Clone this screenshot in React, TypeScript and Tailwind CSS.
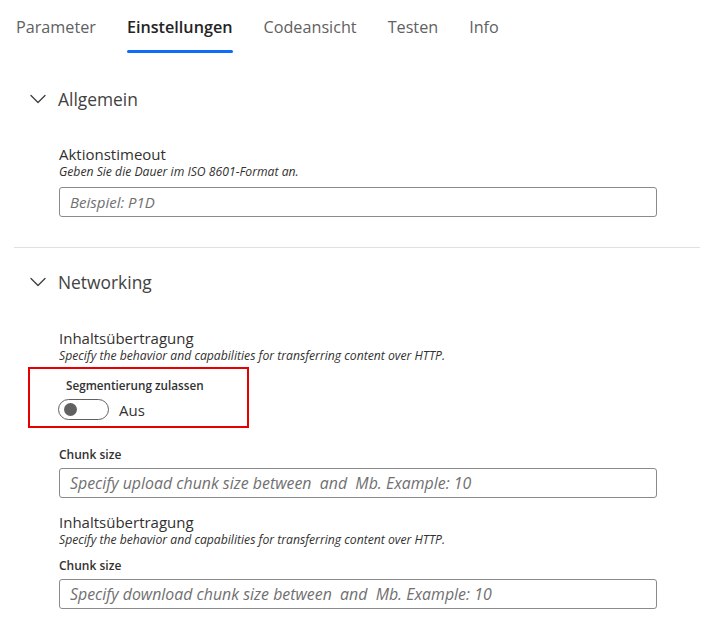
import React from "react";

const Chevron = () => (
  <svg width="16" height="10" viewBox="0 0 16 10" fill="none" className="shrink-0">
    <path d="M1 1.5 L8 8.5 L15 1.5" stroke="#424242" strokeWidth="1.4" strokeLinecap="round" strokeLinejoin="round" />
  </svg>
);

const Input = ({ placeholder, size }: { placeholder: string; size: "sm" | "lg" }) => (
  <div className="w-[598px] h-[30px] border border-[#8a8a8a] rounded-[3px] flex items-center pl-[10px]">
    <span className={"italic text-[#707070] leading-[20px] whitespace-pre " + (size === "lg" ? "text-[15.9px]" : "text-[15px]")}>{placeholder}</span>
  </div>
);

const Label = ({ children }: { children: React.ReactNode }) => (
  <div className="text-[15px] leading-[19px] text-[#323130]">{children}</div>
);

const Sub = ({ children }: { children: React.ReactNode }) => (
  <div className="text-[12.2px] italic leading-[16px] text-[#323130]">{children}</div>
);

export default function App() {
  const tabs = ["Parameter", "Einstellungen", "Codeansicht", "Testen", "Info"];
  return (
    <div className="w-[728px] h-[617px] bg-white overflow-hidden" style={{ fontFamily: '"Open Sans", "Noto Sans", sans-serif' }}>
      <div className="flex pl-[16px] gap-[31px] h-[53px]">
        {tabs.map((t, i) => (
          <div key={t} className="flex flex-col pt-[15px]">
            <span className={"text-[16.2px] leading-[24px] " + (i === 1 ? "font-semibold text-[#242424]" : "text-[#616161]")}>{t}</span>
            <div className={"mt-[11px] h-[3px] rounded-full " + (i === 1 ? "bg-[#0f6cfa]" : "bg-transparent")} />
          </div>
        ))}
      </div>

      <div className="flex items-center gap-[12px] pl-[30px] mt-[32px] h-[28px]">
        <Chevron />
        <span className="text-[17.4px] text-[#424242] leading-[28px]">Allgemein</span>
      </div>

      <div className="pl-[59px] mt-[32px]">
        <Label>Aktionstimeout</Label>
        <Sub>Geben Sie die Dauer im ISO 8601-Format an.</Sub>
        <div className="mt-[7px]">
          <Input size="sm" placeholder="Beispiel: P1D" />
        </div>
      </div>

      <div className="ml-[14px] w-[686px] h-px bg-[#e0e0e0] mt-[30px]" />

      <div className="flex items-center gap-[12px] pl-[30px] mt-[20px] h-[28px]">
        <Chevron />
        <span className="text-[17.4px] text-[#424242] leading-[28px]">Networking</span>
      </div>

      <div className="pl-[59px] mt-[33px]">
        <Label>Inhaltsübertragung</Label>
        <Sub>Specify the behavior and capabilities for transferring content over HTTP.</Sub>
      </div>

      <div className="ml-[28px] mt-[3px] w-[221px] h-[61px] border-2 border-[#e60000] pl-[28px] pt-[8px]">
        <div className="pl-[8px] text-[11.7px] leading-[16px] font-semibold text-[#323130]">Segmentierung zulassen</div>
        <div className="flex items-center mt-[6px] gap-[10px]">
          <div className="w-[51px] h-[21px] rounded-full border border-[#616161] flex items-center pl-[5px]">
            <div className="w-[13px] h-[13px] rounded-full bg-[#616161]" />
          </div>
          <span className="text-[15px] leading-[20px] text-[#323130]">Aus</span>
        </div>
      </div>

      <div className="pl-[59px] mt-[19px]">
        <div className="text-[12px] font-semibold leading-[16px] text-[#323130]">Chunk size</div>
        <div className="mt-[5px]">
          <Input size="lg" placeholder="Specify upload chunk size between  and  Mb. Example: 10" />
        </div>
        <div className="mt-[15px]">
          <Label>Inhaltsübertragung</Label>
        </div>
        <Sub>Specify the behavior and capabilities for transferring content over HTTP.</Sub>
        <div className="mt-[10px] text-[12px] font-semibold leading-[16px] text-[#323130]">Chunk size</div>
        <div className="mt-[5px]">
          <Input size="lg" placeholder="Specify download chunk size between  and  Mb. Example: 10" />
        </div>
      </div>
    </div>
  );
}
